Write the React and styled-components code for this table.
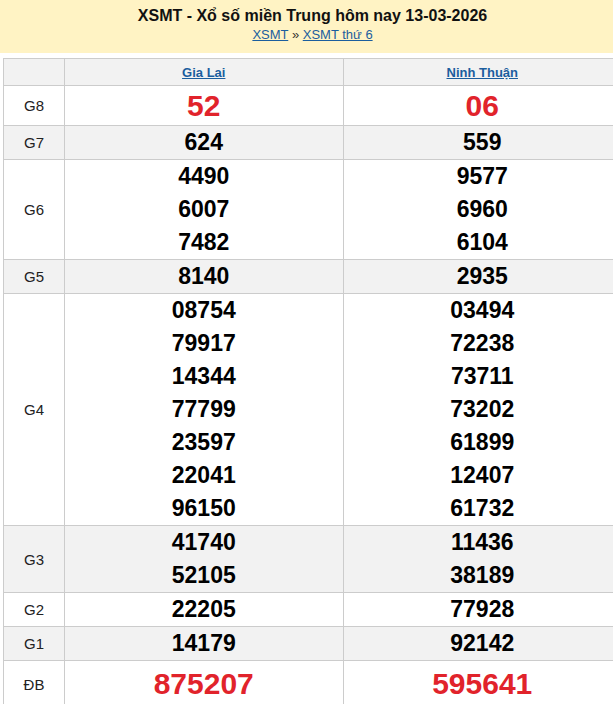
import React from "react";
import styled, { createGlobalStyle } from "styled-components";

const GlobalStyle = createGlobalStyle`
  html, body {
    margin: 0;
    padding: 0;
    overflow: hidden;
    background: #fff;
    font-family: "Liberation Sans", Arial, sans-serif;
  }
`;

const Page = styled.div`
  width: 625px;
`;

const Header = styled.div`
  background: #fff3c4;
  height: 53px;
  text-align: center;
  padding-top: 6px;
  box-sizing: border-box;
`;

const Title = styled.h1`
  margin: 0;
  font-size: 16px;
  line-height: 20px;
  font-weight: bold;
  color: #111;
`;

const Crumbs = styled.div`
  font-size: 13px;
  line-height: 18px;
  color: #333;
`;

const Link = styled.a`
  color: #1b5e9e;
  text-decoration: underline;
`;

const Table = styled.table`
  margin: 5px 3px 0;
  width: 619px;
  border-collapse: collapse;
  table-layout: fixed;
`;

const Row = styled.tr`
  background: ${(p) => (p.$alt ? "#f2f2f2" : "#fff")};
`;

const Cell = styled.td`
  border: 1px solid #cccccc;
  padding: 0;
  text-align: center;
  vertical-align: middle;
`;

const HeadCell = styled(Cell)`
  height: 26px;
  font-size: 13px;
  font-weight: bold;
`;

const Label = styled(Cell)`
  font-size: 15px;
  color: #222;
`;

const Num = styled.div`
  font-weight: bold;
  color: ${(p) => (p.$big ? "#e1232b" : "#000")};
  font-size: ${(p) => (p.$big ? "30px" : "23px")};
  line-height: ${(p) => (p.$lh ? p.$lh : 33)}px;
`;

const prizes = [
  { name: "G8", big: true, lh: 39, a: ["52"], b: ["06"] },
  { name: "G7", a: ["624"], b: ["559"] },
  { name: "G6", a: ["4490", "6007", "7482"], b: ["9577", "6960", "6104"] },
  { name: "G5", a: ["8140"], b: ["2935"] },
  {
    name: "G4",
    a: ["08754", "79917", "14344", "77799", "23597", "22041", "96150"],
    b: ["03494", "72238", "73711", "73202", "61899", "12407", "61732"],
  },
  { name: "G3", a: ["41740", "52105"], b: ["11436", "38189"] },
  { name: "G2", a: ["22205"], b: ["77928"] },
  { name: "G1", a: ["14179"], b: ["92142"] },
  { name: "ĐB", big: true, lh: 46, a: ["875207"], b: ["595641"] },
];

export default function App() {
  return (
    <Page>
      <GlobalStyle />
      <Header>
        <Title>XSMT - Xổ số miền Trung hôm nay 13-03-2026</Title>
        <Crumbs>
          <Link href="#">XSMT</Link> » <Link href="#">XSMT thứ 6</Link>
        </Crumbs>
      </Header>
      <Table>
        <colgroup>
          <col style={{ width: 61 }} />
          <col />
          <col />
        </colgroup>
        <tbody>
          <Row $alt>
            <HeadCell />
            <HeadCell>
              <Link href="#">Gia Lai</Link>
            </HeadCell>
            <HeadCell>
              <Link href="#">Ninh Thuận</Link>
            </HeadCell>
          </Row>
          {prizes.map((p, i) => (
            <Row key={p.name} $alt={i % 2 === 1}>
              <Label>{p.name}</Label>
              <Cell>
                {p.a.map((n) => (
                  <Num key={n} $big={p.big} $lh={p.lh}>{n}</Num>
                ))}
              </Cell>
              <Cell>
                {p.b.map((n) => (
                  <Num key={n} $big={p.big} $lh={p.lh}>{n}</Num>
                ))}
              </Cell>
            </Row>
          ))}
        </tbody>
      </Table>
    </Page>
  );
}
